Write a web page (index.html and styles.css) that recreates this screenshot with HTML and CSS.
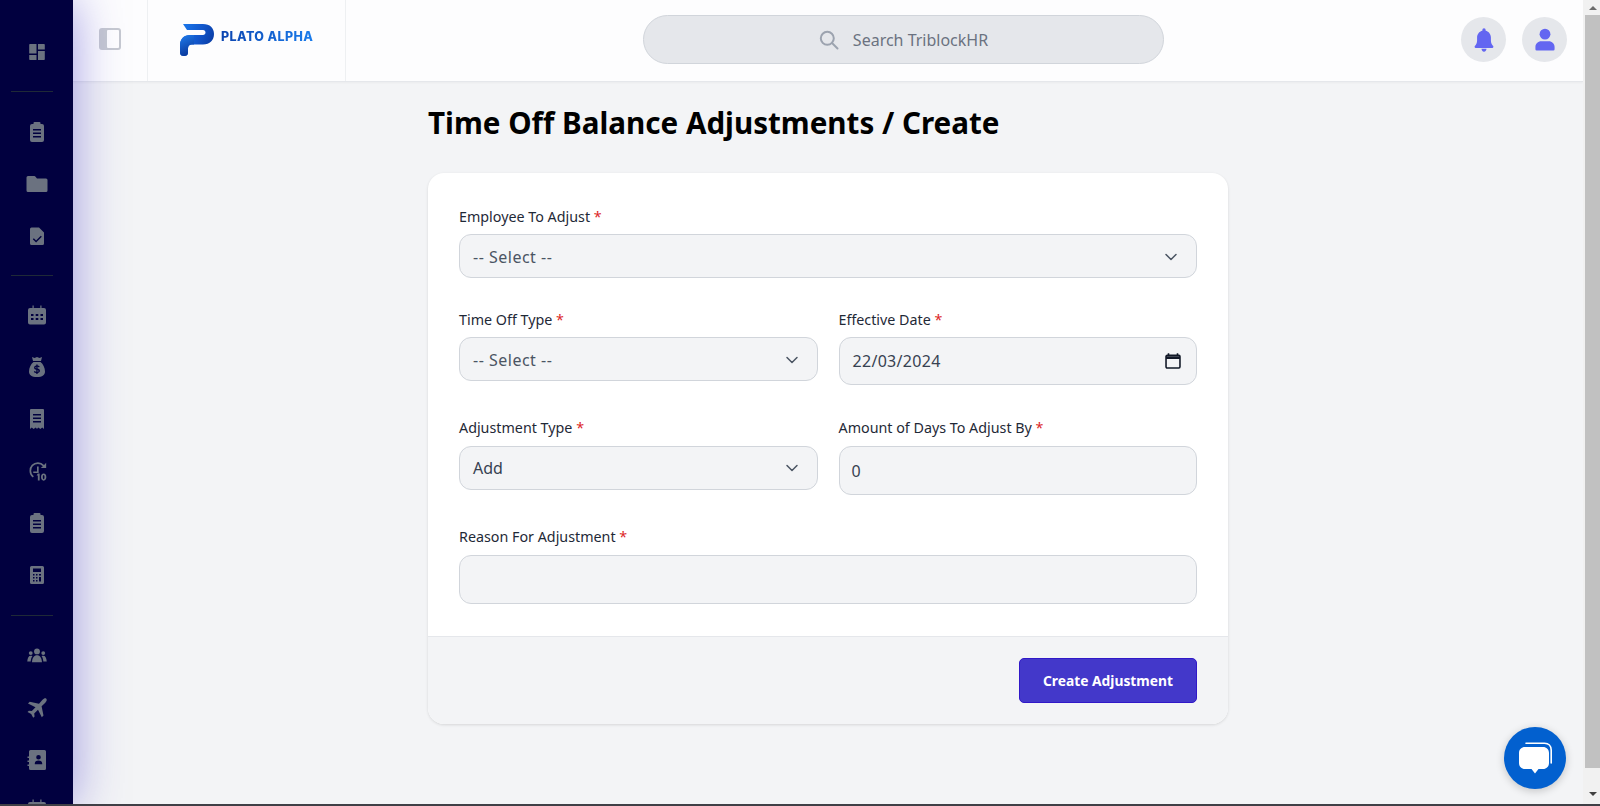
FILE: index.html
```html
<!DOCTYPE html>
<html lang="en">
<head>
<meta charset="utf-8">
<title>Time Off Balance Adjustments / Create</title>
<link rel="stylesheet" href="styles.css">
</head>
<body>
<div class="app">
  <aside class="sidebar">
    <div class="nav-group">
      <span class="nav-item"><svg class="nav-icon" viewBox="0 0 20 20"><path d="M3 2h6.500v9.500H2.200V2.800A.8.800 0 0 1 3 2zM11 2h6a.8.800 0 0 1 .8.800v4.700H11zM11 9h6.800v8.200a.8.800 0 0 1-.8.800h-6zM2.200 13h7.300v5H3a.8.800 0 0 1-.8-.8z"/></svg></span>
    </div>
    <div class="nav-group">
      <span class="nav-item"><svg class="nav-icon" viewBox="0 0 20 20"><path fill-rule="evenodd" d="M7.500 0h5a1 1 0 0 1 1 1v1H15a2 2 0 0 1 2 2v14a2 2 0 0 1-2 2H5a2 2 0 0 1-2-2V4a2 2 0 0 1 2-2h1.500V1a1 1 0 0 1 1-1zM6 7v1.500h8V7zm0 3.500V12h8v-1.500zM6 14v1.500h8V14z"/></svg></span>
      <span class="nav-item"><svg class="nav-icon nav-icon-wide" viewBox="0 0 22 20"><path d="M2 2h6.500a1 1 0 0 1 .8.400L11 4.500h9a1.500 1.500 0 0 1 1.500 1.500v10.500a1.500 1.500 0 0 1-1.500 1.500H2a1.500 1.500 0 0 1-1.500-1.500v-13A1.500 1.500 0 0 1 2 2z"/></svg></span>
      <span class="nav-item"><svg class="nav-icon" viewBox="0 0 20 20"><path fill-rule="evenodd" d="M4.500 1.500H12l5 5v11a1.500 1.500 0 0 1-1.500 1.500h-11A1.500 1.500 0 0 1 3 17.500V3a1.500 1.500 0 0 1 1.500-1.500zm9.300 8.300-4.700 4.700-2.300-2.300-1 1 3.300 3.300 5.700-5.700z"/></svg></span>
    </div>
    <div class="nav-group nav-group-long">
      <span class="nav-item"><svg class="nav-icon" viewBox="0 0 20 20"><path fill-rule="evenodd" d="M5.500.500h1.200V3h6.600V.500h1.200V3H17a2 2 0 0 1 2 2v12.500a2 2 0 0 1-2 2H3a2 2 0 0 1-2-2V5a2 2 0 0 1 2-2h2.500zM4 9v2h2.500V9zm4.700 0v2h2.600V9zm4.800 0v2H16V9zM4 13v2h2.500v-2zm4.700 0v2h2.600v-2zm4.800 0v2H16v-2z"/></svg></span>
      <span class="nav-item"><svg class="nav-icon" viewBox="0 0 20 20"><path fill-rule="evenodd" d="M5 0l2.500 1L10 0l2.500 1L15 0l-1 4H6zM6.500 5h7c2.700 2 4.500 6 4.500 9.500 0 3.500-2.500 5.500-8 5.500s-8-2-8-5.500C2 11 3.800 7 6.500 5zm2.800 2.500v1.100c-1.300.2-2.200 1-2.200 2.100 0 1.300 1 1.800 2.200 2.100v2c-.7-.1-1.300-.4-1.800-.9l-.7 1c.6.600 1.500 1 2.500 1.100v1.100h1.300v-1.100c1.400-.2 2.300-1 2.300-2.300 0-1.300-1-1.800-2.300-2.100V9.700c.5.100 1 .3 1.400.7l.7-1c-.6-.5-1.300-.8-2.100-.9V7.500zm0 2.200v1.700c-.6-.2-.9-.4-.9-.9 0-.4.300-.7.900-.8zm1.300 3.300c.6.200 1 .5 1 1 0 .4-.4.800-1 .9z"/></svg></span>
      <span class="nav-item"><svg class="nav-icon" viewBox="0 0 20 20"><path fill-rule="evenodd" d="M4 0h12a1 1 0 0 1 1 1v19l-1.800-1.600-1.800 1.600-2.200-1.600L10 20l-1.200-1.600L6.600 20l-1.800-1.600L3 20V1a1 1 0 0 1 1-1zM6 5v1.500h8V5zm0 3.500V10h8V8.500zM6 12v1.500h8V12z"/></svg></span>
      <span class="nav-item"><svg class="nav-icon nav-icon-wide" viewBox="0 0 24 24"><path d="M13 1.500a10 10 0 0 0-10 10.500 10 10 0 0 0 4 7.800l1.200-1.500A8 8 0 0 1 5 12a8 8 0 0 1 8-8.500 8 8 0 0 1 6 2.700L16.500 8.500H23V2l-2.500 2.700A10 10 0 0 0 13 1.500zM12 6.500v6H7.500v1.800H14V6.500z"/><path d="M13 15h2.200v8.500h-2.200v-6h-1.500zM20 15c-2 0-3.200 1.700-3.200 4.300s1.200 4.300 3.200 4.300 3.200-1.700 3.200-4.300S22 15 20 15zm0 1.800c.7 0 1 .8 1 2.500s-.3 2.500-1 2.500-1-.8-1-2.500.3-2.500 1-2.500z"/></svg></span>
      <span class="nav-item"><svg class="nav-icon" viewBox="0 0 20 20"><path fill-rule="evenodd" d="M7.500 0h5a1 1 0 0 1 1 1v1H15a2 2 0 0 1 2 2v14a2 2 0 0 1-2 2H5a2 2 0 0 1-2-2V4a2 2 0 0 1 2-2h1.500V1a1 1 0 0 1 1-1zM6 7v1.500h8V7zm0 3.500V12h8v-1.500zM6 14v1.500h8V14z"/></svg></span>
      <span class="nav-item"><svg class="nav-icon" viewBox="0 0 20 20"><path fill-rule="evenodd" d="M4.500 1h11A1.500 1.500 0 0 1 17 2.500v15a1.500 1.500 0 0 1-1.500 1.500h-11A1.500 1.500 0 0 1 3 17.500v-15A1.500 1.500 0 0 1 4.500 1zM6 3.500V7h8V3.500zM6 9v1.500h1.500V9zm3 0v1.500h1.500V9zm3 0v1.500h2V9zM6 12v1.500h1.500V12zm3 0v1.500h1.500V12zm3 0v4.500h2V12zM6 15v1.500h1.500V15zm3 0v1.500h1.500V15z"/></svg></span>
    </div>
    <div class="nav-group">
      <span class="nav-item"><svg class="nav-icon" viewBox="0 0 24 20"><circle cx="12" cy="4.500" r="3.500"/><circle cx="4.500" cy="6.500" r="2.300"/><circle cx="19.500" cy="6.500" r="2.300"/><path d="M12 9c3.500 0 5.500 2.500 6 8.500H6C6.500 11.500 8.500 9 12 9zM4.500 9.700c.8 0 1.500.2 2 .6C5.200 12 4.600 14 4.400 16.500H.3C.7 12 2 9.700 4.500 9.700zM19.500 9.700c2.500 0 3.800 2.300 4.200 6.800h-4.100c-.2-2.500-.8-4.500-2.100-6.200.5-.4 1.200-.6 2-.6z"/></svg></span>
      <span class="nav-item"><svg class="nav-icon" viewBox="0 0 20 20"><path d="M19.300.700c.8.800.5 2.500-1 4l-3.700 3.600 1.900 9.300-1.700 1.700-3.800-7.500-3.800 3.700.4 2.900-1.400 1.400-2-3.700-3.700-2 1.400-1.400 2.900.4 3.700-3.800L1 5.500l1.700-1.700 9.300 1.900 3.300-3.800c1.500-1.500 3.200-2 4-1.200z"/></svg></span>
      <span class="nav-item"><svg class="nav-icon" viewBox="0 0 20 20"><path fill-rule="evenodd" d="M3.500 0h14A1.500 1.500 0 0 1 19 1.500v17a1.500 1.500 0 0 1-1.500 1.500h-14A1.500 1.500 0 0 1 2 18.500V16H.5v-1.500H2V12H.5v-1.500H2V8H.5V6.500H2v-5A1.500 1.500 0 0 1 3.500 0zM11.500 5a2.300 2.300 0 1 0 0 4.600 2.300 2.300 0 0 0 0-4.600zM11.500 10.500c-2.300 0-3.700 1.200-3.700 3v.7h7.400v-.7c0-1.800-1.400-3-3.700-3z"/></svg></span>
      <span class="nav-item"><svg class="nav-icon nav-icon-last" viewBox="0 0 20 20"><path fill-rule="evenodd" d="M5.500.500h1.200V3h6.600V.500h1.200V3H17a2 2 0 0 1 2 2v12.500a2 2 0 0 1-2 2H3a2 2 0 0 1-2-2V5a2 2 0 0 1 2-2h2.500z"/></svg></span>
    </div>
  </aside>

  <div class="workspace">
    <header class="topbar">
      <div class="toggle-cell">
        <svg class="toggle-icon" viewBox="0 0 22 22"><rect x="0" y="0" width="22" height="22" rx="3" class="toggle-bg"/><rect x="8" y="2" width="12" height="18" rx="1" class="toggle-panel"/></svg>
      </div>
      <div class="logo-cell">
        <svg class="logo-mark" viewBox="0 0 36 34">
          <defs>
            <linearGradient id="logoA" x1="0" y1="0" x2="1" y2="0.400"><stop offset="0" stop-color="#1b7cf0"/><stop offset="0.600" stop-color="#1257cc"/><stop offset="1" stop-color="#0b3fa8"/></linearGradient>
            <linearGradient id="logoB" x1="0" y1="0" x2="0.300" y2="1"><stop offset="0" stop-color="#1f7dee"/><stop offset="1" stop-color="#0a3a9e"/></linearGradient>
          </defs>
          <path fill="url(#logoA)" d="M4 1H24C31 1 35 5 35 11C35 17 31 21.500 24 21.500H13C10.500 21.500 9 23 9 25.500V29.500A4 3.500 0 0 1 1 29.500V22C1 16 5 12 11 12H24C25.500 12 26.500 11 26.500 9.500C26.500 8 25.500 7 24 7H8Z"/>
          <path fill="url(#logoB)" d="M11 12H15V21.500H13C10.500 21.500 9 23 9 25.500V29.500A4 3.500 0 0 1 1 29.500V22C1 16 5 12 11 12Z"/>
        </svg>
        <span class="logo-text">PLATO ALPHA</span>
      </div>
      <div class="search-cell">
        <div class="search">
          <svg class="search-icon" viewBox="0 0 20 20"><circle cx="8.300" cy="8.300" r="6.500"/><path d="M13 13l5.500 5.500"/></svg>
          <span class="search-text">Search TriblockHR</span>
        </div>
      </div>
      <div class="top-actions">
        <span class="round-btn"><svg class="round-icon" viewBox="0 0 24 28"><path d="M12 0a2 2 0 0 1 2 2v.8c3.800.9 6.300 4.200 6.300 8.200v3.500c0 3 1.200 5 2.700 6.800.6.800.2 2.200-1 2.200H2c-1.200 0-1.600-1.400-1-2.200 1.500-1.800 2.700-3.800 2.700-6.800V11c0-4 2.500-7.300 6.300-8.200V2a2 2 0 0 1 2-2zM9 24.500h6c0 1.900-1.300 3.500-3 3.500s-3-1.600-3-3.500z"/></svg></span>
        <span class="round-btn"><svg class="round-icon" viewBox="0 0 24 28"><circle cx="12" cy="7" r="6.500"/><path d="M7.500 15.500h9c3.900 0 7 3 7 7v2.500a1.500 1.500 0 0 1-1.500 1.500H2A1.500 1.500 0 0 1 .5 25v-2.500c0-4 3.100-7 7-7z"/></svg></span>
      </div>
    </header>

    <main class="content">
      <h1 class="page-title">Time Off Balance Adjustments / Create</h1>
      <form class="card">
        <div class="form-body">
          <div class="field field-wide field-first">
            <label class="label">Employee To Adjust <span class="req">*</span></label>
            <div class="control select-control"><span class="muted">-- Select --</span><svg class="chev" viewBox="0 0 20 20"><path d="M5 7.500l5 5 5-5"/></svg></div>
          </div>
          <div class="field">
            <label class="label">Time Off Type <span class="req">*</span></label>
            <div class="control select-control"><span class="muted">-- Select --</span><svg class="chev" viewBox="0 0 20 20"><path d="M5 7.500l5 5 5-5"/></svg></div>
          </div>
          <div class="field">
            <label class="label">Effective Date <span class="req">*</span></label>
            <div class="control date-control"><span class="value date-value">22/03/2024</span><svg class="cal" viewBox="0 0 16 16"><path d="M4 1v2.500M12 1v2.500"/><rect x="1.800" y="3" width="12.400" height="11.200" rx="1"/><path class="cal-bar" d="M1.800 5h12.400"/></svg></div>
          </div>
          <div class="field">
            <label class="label label-tall">Adjustment Type <span class="req">*</span></label>
            <div class="control select-control select-filled"><span class="value">Add</span><svg class="chev" viewBox="0 0 20 20"><path d="M5 7.500l5 5 5-5"/></svg></div>
          </div>
          <div class="field">
            <label class="label label-tall">Amount of Days To Adjust By <span class="req">*</span></label>
            <div class="control text-control"><span class="value">0</span></div>
          </div>
          <div class="field field-wide">
            <label class="label label-plain">Reason For Adjustment <span class="req">*</span></label>
            <div class="control text-control"></div>
          </div>
        </div>
        <div class="form-footer">
          <button type="button" class="submit">Create Adjustment</button>
        </div>
      </form>
    </main>
  </div>

  <div class="scrollbar">
    <span class="arrow arrow-up"></span>
    <span class="thumb"></span>
    <span class="arrow arrow-down"></span>
  </div>

  <div class="chat">
    <svg class="chat-icon" viewBox="0 0 36 34"><path class="chat-back" d="M9 2.200H27.500C31.500 2.200 34.200 5 34.200 9V22"/><path d="M8 6H26C29.500 6 32 8.500 32 12V22C32 25.500 29.500 28 26 28H21.500L18 32.500 14.500 28H8C4.500 28 2 25.500 2 22V12C2 8.500 4.500 6 8 6Z"/></svg>
  </div>
</div>
<div class="window-edge"></div>
</body>
</html>
```

FILE: styles.css
```css
* { box-sizing: border-box; }
html, body { margin: 0; height: 100%; overflow: hidden; }
body {
  display: flex;
  flex-direction: column;
  background: #f3f4f6;
  color: #111827;
  font-family: "Noto Sans", "Open Sans", sans-serif;
}
.app { position: relative; flex: 1; min-height: 0; display: flex; overflow: hidden; }
.window-edge { height: 2px; background: #3f3f46; flex: none; }

/* Sidebar */
.sidebar {
  width: 73px;
  flex: none;
  height: 806px;
  background: #01003f;
  box-shadow: 0 0 50px rgba(67, 56, 202, 0.5);
  position: relative;
  z-index: 2;
  overflow: hidden;
  padding-top: 26px;
}
.nav-group { display: flex; flex-direction: column; padding-bottom: 13px; }
.nav-group + .nav-group { padding-top: 15px; position: relative; }
.nav-group-long.nav-group { padding-top: 14px; padding-bottom: 14px; }
.nav-group + .nav-group::before {
  content: "";
  position: absolute;
  top: 0;
  left: 11px;
  width: 42px;
  height: 1px;
  background: #1f2937;
}
.nav-item { height: 52px; display: flex; align-items: center; justify-content: center; }
.nav-icon { width: 20px; height: 20px; fill: #6b7280; }
.nav-icon-wide { width: 22px; }
.nav-icon-last { margin-bottom: 6px; }

/* Topbar */
.workspace { flex: 1; min-width: 0; display: flex; flex-direction: column; }
.topbar {
  height: 82px;
  flex: none;
  display: flex;
  align-items: stretch;
  background: #fdfdfe;
  border-bottom: 1px solid #e5e7eb;
  box-shadow: 0 1px 2px rgba(0, 0, 0, 0.04);
}
.toggle-cell {
  width: 75px;
  display: flex;
  align-items: center;
  justify-content: center;
  border-right: 1px solid #eef0f2;
}
.toggle-icon { width: 22px; height: 22px; margin-top: -4px; }
.toggle-bg { fill: #c7cad1; }
.toggle-panel { fill: #ffffff; }
.logo-cell {
  width: 198px;
  display: flex;
  align-items: center;
  padding-left: 31px;
  padding-bottom: 2px;
  gap: 6px;
  border-right: 1px solid #eef0f2;
}
.logo-mark { width: 36px; height: 34px; flex: none; }
.logo-text {
  font-family: Inter, "Noto Sans", sans-serif;
  font-size: 12.500px;
  font-weight: 800;
  letter-spacing: 0.4px;
  white-space: nowrap;
  background: linear-gradient(90deg, #0b44b0, #1a7cec);
  -webkit-background-clip: text;
  background-clip: text;
  color: transparent;
  margin-top: -7px;
}
.search-cell { flex: 1; display: flex; align-items: center; padding-left: 297px; padding-bottom: 2px; }
.search {
  width: 521px;
  height: 49px;
  display: flex;
  align-items: center;
  justify-content: center;
  gap: 14px;
  background: #e5e7eb;
  border: 1px solid #d1d5db;
  border-radius: 25px;
}
.search-icon { width: 20px; height: 20px; fill: none; stroke: #9ca3af; stroke-width: 2; stroke-linecap: round; }
.search-text { font-size: 16px; color: #6b7280; }
.top-actions { display: flex; align-items: center; gap: 16px; padding: 0 16px 2px 0; }
.round-btn {
  width: 45px;
  height: 45px;
  border-radius: 50%;
  background: #e5e7eb;
  display: flex;
  align-items: center;
  justify-content: center;
}
.round-icon { width: 20px; height: 24px; fill: #6366f1; }

/* Content */
.content { width: 800px; margin: 0 auto; padding-top: 21px; }
.page-title { margin: 0; font-size: 29.600px; line-height: 40px; font-weight: 700; color: #000; }
.card {
  margin-top: 30px;
  background: #fff;
  border-radius: 16px;
  box-shadow: 0 1px 3px rgba(0, 0, 0, 0.12);
  overflow: hidden;
}
.form-body {
  display: grid;
  grid-template-columns: 1fr 1fr;
  column-gap: 21px;
  row-gap: 32px;
  padding: 33px 31px 32px;
}
.field { min-width: 0; }
.field-wide { grid-column: 1 / -1; }
.field-first { margin-bottom: -1px; }
.label { display: block; font-size: 14.300px; line-height: 20px; color: #1f2937; padding-top: 1px; margin-bottom: 7px; height: 21px; }
.label-tall { margin-bottom: 8px; }
.label-plain { padding-top: 0; margin-bottom: 8px; height: 20px; }
.req { color: #dc2626; }
.control {
  display: flex;
  align-items: center;
  justify-content: space-between;
  background: #f3f4f6;
  border: 1px solid #d1d5db;
  border-radius: 12px;
  padding: 0 13px;
  font-size: 16px;
  color: #374151;
}
.select-control { height: 44px; padding-right: 15px; padding-top: 1px; }
.select-filled { padding-top: 0; }
.date-control { height: 48px; padding-right: 14px; }
.text-control { height: 49px; padding-left: 12px; }
.muted { color: #4b5563; letter-spacing: 0.5px; }
.value { color: #374151; }
.date-value { letter-spacing: 0.3px; }
.chev { width: 20px; height: 20px; fill: none; stroke: #4b5563; stroke-width: 1.500; stroke-linecap: round; stroke-linejoin: round; }
.cal { width: 18px; height: 18px; fill: none; stroke: #111827; stroke-width: 1.400; margin-bottom: 1px; }
.cal-bar { stroke-width: 2.400; }
.form-footer {
  display: flex;
  justify-content: flex-end;
  background: #f3f4f6;
  border-top: 1px solid #e5e7eb;
  padding: 21px 31px;
}
.submit {
  width: 178px;
  height: 45px;
  background: #4338ca;
  border: 1px solid #3018c8;
  border-radius: 5px;
  color: #fff;
  font-family: "Noto Sans", sans-serif;
  font-size: 13.800px;
  font-weight: 700;
}

/* Scrollbar */
.scrollbar {
  width: 17px;
  flex: none;
  display: flex;
  flex-direction: column;
  align-items: flex-end;
  background: #f1f1f1;
  position: relative;
  z-index: 1;
}
.thumb { width: 15px; flex: 1; background: #c1c1c1; }
.arrow { width: 15px; height: 15px; flex: none; display: flex; align-items: center; justify-content: center; }
.arrow::before { content: ""; border-left: 4px solid transparent; border-right: 4px solid transparent; }
.arrow-up::before { border-bottom: 4px solid #6b6b6b; }
.arrow-down { height: 36px; padding-top: 16px; }
.arrow-down::before { border-top: 4px solid #404040; }

/* Chat launcher */
.chat {
  position: absolute;
  left: 1504px;
  top: 727px;
  width: 62px;
  height: 62px;
  border-radius: 50%;
  background: #0260cf;
  box-shadow: 0 2px 8px rgba(0, 0, 0, 0.2);
  display: flex;
  align-items: center;
  justify-content: center;
  z-index: 3;
}
.chat-icon { width: 36px; height: 34px; fill: #fff; }
.chat-back { fill: none; stroke: #fff; stroke-width: 1.600; stroke-linecap: round; }
```
